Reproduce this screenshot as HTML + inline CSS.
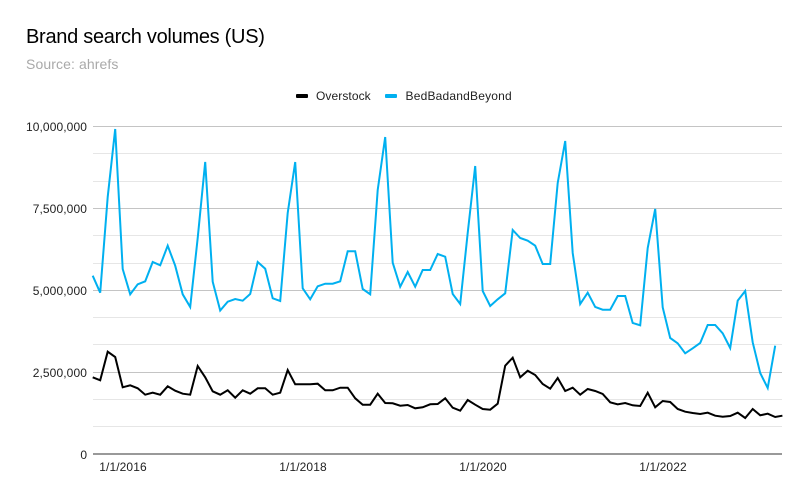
<!DOCTYPE html>
<html>
<head>
<meta charset="utf-8">
<style>
html,body{margin:0;padding:0;background:#fff;}
body{width:807px;height:499px;overflow:hidden;}
svg{display:block;font-family:"Liberation Sans",Arial,sans-serif;}
</style>
</head>
<body>
<svg width="807" height="499" viewBox="0 0 807 499" xmlns="http://www.w3.org/2000/svg">
<rect width="807" height="499" fill="#fff"/>
<text x="26" y="43" font-size="20" fill="#000" letter-spacing="-.28">Brand search volumes (US)</text>
<text x="26" y="69" font-size="14" fill="#a9a9a9" letter-spacing=".1">Source: ahrefs</text>

<rect x="296" y="94" width="12" height="4" rx="1" fill="#000"/>
<text x="316" y="100" font-size="12" fill="#222" letter-spacing=".08">Overstock</text>
<rect x="385" y="94" width="12" height="4" rx="1" fill="#00b0f0"/>
<text x="405.500" y="100" font-size="12" fill="#222" letter-spacing=".2">BedBadandBeyond</text>

<g stroke="#e6e6e6" stroke-width="1">
<line x1="93" x2="782" y1="153.500" y2="153.500"/>
<line x1="93" x2="782" y1="181.500" y2="181.500"/>
<line x1="93" x2="782" y1="235.500" y2="235.500"/>
<line x1="93" x2="782" y1="263.500" y2="263.500"/>
<line x1="93" x2="782" y1="317.500" y2="317.500"/>
<line x1="93" x2="782" y1="344.500" y2="344.500"/>
<line x1="93" x2="782" y1="399.500" y2="399.500"/>
<line x1="93" x2="782" y1="426.500" y2="426.500"/>
</g>
<g stroke="#c4c4c4" stroke-width="1">
<line x1="93" x2="782" y1="126.500" y2="126.500"/>
<line x1="93" x2="782" y1="208.500" y2="208.500"/>
<line x1="93" x2="782" y1="290.500" y2="290.500"/>
<line x1="93" x2="782" y1="372.500" y2="372.500"/>
</g>
<line x1="93" x2="782" y1="454" y2="454" stroke="#333" stroke-width="1"/>

<g font-size="12" fill="#222" text-anchor="end">
<text x="87" y="131" letter-spacing=".1">10,000,000</text>
<text x="87" y="213" letter-spacing=".1">7,500,000</text>
<text x="87" y="295" letter-spacing=".1">5,000,000</text>
<text x="87" y="377" letter-spacing=".1">2,500,000</text>
<text x="87" y="459">0</text>
</g>
<g font-size="12" fill="#222" text-anchor="middle" letter-spacing=".1">
<text x="123" y="471">1/1/2016</text>
<text x="303" y="471">1/1/2018</text>
<text x="483" y="471">1/1/2020</text>
<text x="663" y="471">1/1/2022</text>
</g>

<g transform="translate(-.6,0)">
<polyline fill="none" stroke="#00b0f0" stroke-width="2" stroke-linejoin="miter" stroke-miterlimit="4" points="93.3,275.7 100.8,292.7 108.3,197 115.8,129 123.3,269 130.8,294.3 138.3,284.3 145.8,281.3 153.3,262 160.8,265.3 168.3,245.7 175.8,265.7 183.3,294.3 190.8,307 198.3,238 205.8,162 213.3,281.7 220.8,310.5 228.3,301.7 235.8,299 243.3,300.7 250.8,294 258.3,262 265.8,268.7 273.3,298.3 280.8,301 288.3,213 295.8,162 303.3,288.3 310.8,299.3 318.3,286.3 325.8,283.7 333.3,283.7 340.8,281.3 348.3,251.3 355.8,251.3 363.3,289 370.8,294.3 378.3,190 385.8,137 393.3,262.7 400.8,286.7 408.3,272 415.8,286.7 423.3,270 430.8,270 438.3,254 445.8,256.7 453.3,294 460.8,304 468.3,233 475.8,166 483.3,291 490.8,306 498.3,299.3 505.8,293.3 513.3,230 520.8,238 528.3,240.7 535.8,245.7 543.3,264 550.8,264 558.3,183 565.8,141 573.3,253 580.8,304 588.3,292.7 595.8,307 603.3,309.7 610.8,309.7 618.3,296 625.8,296 633.3,323 640.8,325.3 648.3,248 655.8,209 663.3,307.3 670.8,338 678.3,343.3 685.8,353.3 693.3,348.3 700.8,343 708.3,325 715.8,325 723.3,333.3 730.8,348 738.3,300.7 745.8,291 753.3,342.3 760.8,373 768.3,388 775.8,345.7"/>

<polyline fill="none" stroke="#000" stroke-width="2" stroke-linejoin="miter" stroke-miterlimit="12" points="93.3,377.3 100.8,380.3 108.3,351.7 115.8,357 123.3,387.3 130.8,385.3 138.3,388.3 145.8,394.7 153.3,392.7 160.8,394.7 168.3,386.3 175.8,390.7 183.3,393.7 190.8,394.7 198.3,366 205.8,377.3 213.3,391.3 220.8,394.7 228.3,390.3 235.8,397.7 243.3,390.3 250.8,393.7 258.3,388.3 265.8,388.3 273.3,394.7 280.8,392.7 288.3,370 295.8,384.3 303.3,384.3 310.8,384.3 318.3,383.7 325.8,390.3 333.3,390.3 340.8,387.7 348.3,387.7 355.8,398.3 363.3,404.7 370.8,404.7 378.3,393.7 385.8,403 393.3,403.3 400.8,405.7 408.3,405 415.8,408.3 423.3,407.3 430.8,404.3 438.3,404 445.8,398.3 453.3,407.7 460.8,410.7 468.3,400 475.8,404.7 483.3,409 490.8,409.7 498.3,403.7 505.8,365.7 513.3,357.7 520.8,377.3 528.3,370.7 535.8,375 543.3,384 550.8,388.7 558.3,378 565.8,391 573.3,387.7 580.8,394.7 588.3,389 595.8,391 603.3,394 610.8,402.3 618.3,404.3 625.8,403 633.3,405.3 640.8,406 648.3,392.7 655.8,407.3 663.3,401 670.8,402 678.3,409 685.8,411.7 693.3,413 700.8,414 708.3,412.7 715.8,415.7 723.3,416.7 730.8,416 738.3,412.7 745.8,418 753.3,409 760.8,415.3 768.3,413.7 775.8,417 783,415.7"/>
</g>
</svg>
</body>
</html>
